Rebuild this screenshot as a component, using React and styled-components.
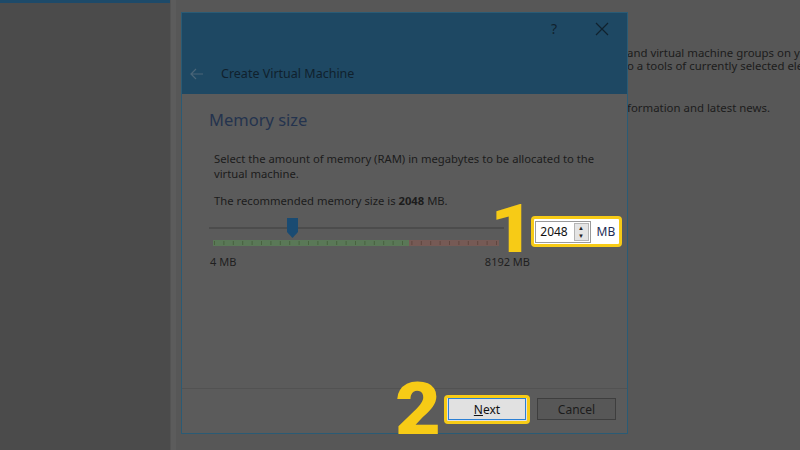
import React from 'react';
import styled, { createGlobalStyle } from 'styled-components';

const Global = createGlobalStyle`
  html, body { margin: 0; padding: 0; }
  body { font-family: "Noto Sans", "Open Sans", sans-serif; background: #4b4b4b; }
`;

const Screen = styled.div`
  width: 800px;
  height: 450px;
  display: flex;
  overflow: hidden;
`;

const Sidebar = styled.div`
  width: 170px;
  flex-shrink: 0;
  background: #4b4b4b;
  border-top: 3px solid #1d4a69;
  box-sizing: border-box;
`;

const Divider = styled.div`
  width: 6px;
  flex-shrink: 0;
  background: #5c5c5c;
  border-left: 1px solid #545454;
  box-sizing: border-box;
`;

const Main = styled.div`
  flex: 1;
  min-width: 0;
  overflow: hidden;
  position: relative;
  background: #575757;
`;

const Welcome = styled.div`
  padding: 46px 0 0 451px;
  font-size: 11.4px;
  color: #1c1c1c;
  white-space: nowrap;
  line-height: 13px;
  p { margin: 0 0 29px; }
`;

const Dialog = styled.div`
  position: absolute;
  left: 5px;
  top: 12px;
  width: 447px;
  height: 422px;
  box-sizing: border-box;
  border: 1px solid #2a5b75;
  background: #5b5b5b;
  display: flex;
  flex-direction: column;
`;

const Header = styled.div`
  height: 81px;
  background: #1e4863;
  display: flex;
  flex-direction: column;
  justify-content: space-between;
  padding: 6px 0 12px 8px;
  box-sizing: border-box;
`;

const TitleButtons = styled.div`
  display: flex;
  justify-content: flex-end;
  gap: 38px;
  padding-right: 18px;
  color: #10222e;
  font-size: 14px;
`;

const HelpBtn = styled.span`
  font-size: 14px;
  line-height: 20px;
`;

const TitleRow = styled.div`
  display: flex;
  align-items: center;
  gap: 17px;
  color: #10212d;
  font-size: 12.5px;
`;

const Body = styled.div`
  flex: 1;
  padding: 14px 0 0 27px;
  color: #1c1c1c;
  font-size: 11.25px;
`;

const Heading = styled.h1`
  margin: 0 0 20px;
  font-size: 16.5px;
  font-weight: normal;
  color: #24334e;
`;

const Para = styled.p`
  margin: 0 0 12px 5px;
  line-height: 15px;
  white-space: nowrap;
`;

const SliderRow = styled.div`
  display: flex;
  align-items: flex-start;
  margin-top: -4px;
`;

const SliderCol = styled.div`
  width: 320px;
  display: flex;
  flex-direction: column;
  padding-top: 1px;
`;

const Scale = styled.div`
  display: flex;
  justify-content: space-between;
  margin: 8px 0 0 1px;
  width: 320px;
  font-size: 11px;
  color: #1f1f1f;
`;

const BigNum = styled.span`
  font-family: Roboto, "Liberation Sans", sans-serif;
  font-weight: 900;
  font-size: ${p => p.$size || 66}px;
  line-height: 50px;
  color: #f7cb16;
  letter-spacing: -1px;
  display: inline-block;
  transform: scaleX(${p => p.$stretch || 1});
`;

const Highlight = styled.div`
  border: 3px solid #f7cb16;
  border-radius: 4px;
  background: ${p => p.$bg || '#ffffff'};
  display: flex;
  align-items: center;
  box-sizing: border-box;
`;

const SpinBox = styled.div`
  width: 60px;
  height: 22px;
  border: 1px solid #9a9a9a;
  box-sizing: border-box;
  display: flex;
  align-items: center;
  justify-content: space-between;
  padding-left: 4px;
  font-size: 12px;
  color: #111;
  margin: 0 6px 0 1px;
`;

const Arrows = styled.div`
  width: 15px;
  height: 18px;
  margin-right: 1px;
  background: #e4e4e4;
  border: 1px solid #b5b5b5;
  box-sizing: border-box;
  display: flex;
  flex-direction: column;
  align-items: center;
  justify-content: space-around;
  font-size: 6px;
  line-height: 6px;
  color: #222;
`;

const Unit = styled.span`
  font-size: 12px;
  color: #1d2c55;
  padding-right: 4px;
`;

const Footer = styled.div`
  height: 45px;
  border-top: 1px solid #525252;
  display: flex;
  align-items: center;
  justify-content: flex-end;
  gap: 8px;
  padding: 0 11px 4px 0;
  box-sizing: border-box;
`;

const Button = styled.button`
  width: ${p => p.$w || 79}px;
  height: 22px;
  font-family: "Noto Sans", sans-serif;
  font-size: 12px;
  padding: 0;
  box-sizing: border-box;
  background: ${p => (p.$primary ? '#e1e1e1' : '#575757')};
  border: 1px solid ${p => (p.$primary ? '#2b7fd4' : '#3e3e3e')};
  color: ${p => (p.$primary ? '#111' : '#1c1c1c')};
  u { text-decoration: underline; }
`;

const Slider = () => {
  const ticks = [];
  for (let i = 0; i < 31; i++) ticks.push(5 + i * 9.4);
  return (
    <svg width="300" height="29" viewBox="0 0 300 29">
      <rect x="0" y="10" width="295" height="2" fill="#4c4c4c" />
      <rect x="4" y="23" width="196" height="6" fill="#5a7857" />
      <rect x="200" y="23" width="90" height="6" fill="#765a55" />
      {ticks.map((x, i) => (
        <rect key={i} x={x} y="24" width="1" height="4" fill={x < 200 ? '#48623f' : '#60463f'} />
      ))}
      <path d="M78 1 h11 v14 l-5.5 6 l-5.5 -6 z" fill="#1a4b72" />
    </svg>
  );
};

const App = () => (
  <Screen>
    <Global />
    <Sidebar />
    <Divider />
    <Main>
      <Welcome>
        <p>
          and virtual machine groups on your computer.<br />
          o a tools of currently selected elements.
        </p>
        <p>formation and latest news.</p>
      </Welcome>
      <Dialog>
        <Header>
          <TitleButtons>
            <HelpBtn>?</HelpBtn>
            <svg width="14" height="20" viewBox="0 0 14 20">
              <path d="M1 4 L13 16 M13 4 L1 16" stroke="#10222e" strokeWidth="1.2" />
            </svg>
          </TitleButtons>
          <TitleRow>
            <svg width="14" height="12" viewBox="0 0 14 12">
              <path d="M13 6 H1 M6 1 L1 6 L6 11" stroke="#4a6578" strokeWidth="1.2" fill="none" />
            </svg>
            <span>Create Virtual Machine</span>
          </TitleRow>
        </Header>
        <Body>
          <Heading>Memory size</Heading>
          <Para>Select the amount of memory (RAM) in megabytes to be allocated to the<br />virtual machine.</Para>
          <Para>The recommended memory size is <b>2048</b> MB.</Para>
          <SliderRow>
            <SliderCol>
              <Slider />
              <Scale>
                <span>4 MB</span>
                <span>8192 MB</span>
              </Scale>
            </SliderCol>
            <BigNum $stretch={1.15} style={{ margin: '-11px 0 0 -36px' }}>1</BigNum>
            <Highlight style={{ width: 91, height: 31, marginLeft: 1 }}>
              <SpinBox>
                2048
                <Arrows>
                  <span>▲</span>
                  <span>▼</span>
                </Arrows>
              </SpinBox>
              <Unit>MB</Unit>
            </Highlight>
          </SliderRow>
        </Body>
        <Footer>
          <BigNum $size={72} $stretch={1.1} style={{ marginRight: -2, marginTop: 2 }}>2</BigNum>
          <Highlight $bg="#e1e1e1" style={{ width: 86, height: 29, justifyContent: 'center', marginRight: -1 }}>
            <Button $primary $w={78}><u>N</u>ext</Button>
          </Highlight>
          <Button>Cancel</Button>
        </Footer>
      </Dialog>
    </Main>
  </Screen>
);

export default App;
